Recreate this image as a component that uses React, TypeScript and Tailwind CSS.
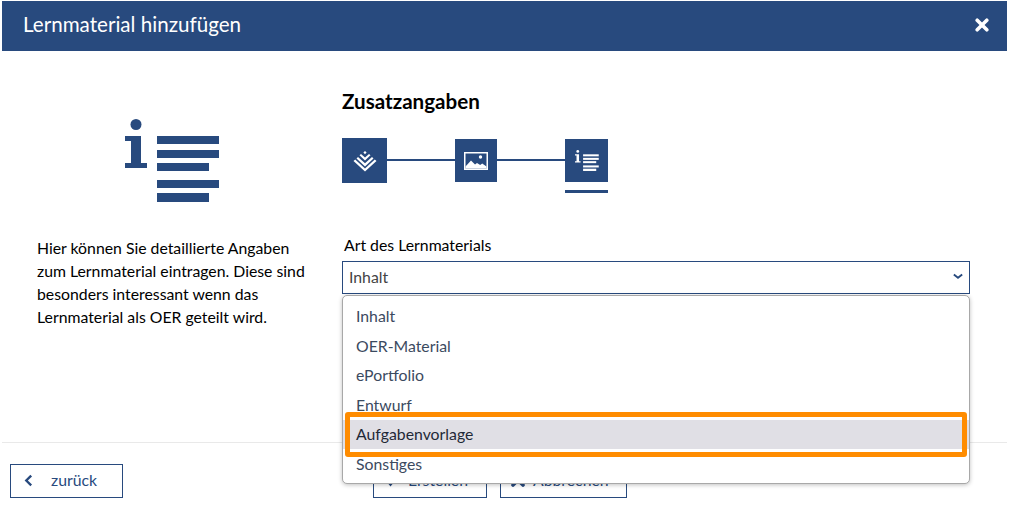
const OPTIONS = ["Inhalt", "OER-Material", "ePortfolio", "Entwurf", "Aufgabenvorlage", "Sonstiges"];

function InfoList({ className }: { className?: string }) {
  return (
    <svg viewBox="0 0 95 83" className={className} fill="currentColor">
      <circle cx="11" cy="5.5" r="5.5" />
      <path d="M0 17h16v27h6v5H0v-5h6V22H0z" />
      <rect x="32" y="17" width="62" height="8" />
      <rect x="32" y="31" width="62" height="8" />
      <rect x="32" y="44" width="52" height="8" />
      <rect x="32" y="61" width="62" height="8" />
      <rect x="32" y="74" width="52" height="9" />
    </svg>
  );
}

function Layers() {
  return (
    <svg viewBox="0 0 24 24" className="w-[24px] h-[24px] text-white" fill="currentColor">
      <path d="M12 2l1.6 1.6L12 5.2l-1.6-1.6z" />
      <path d="M6.5 6.3L8 5l4 3.6L16 5l1.5 1.3L12 11.5z" />
      <path d="M3.5 9.4L5 8l7 6.3L19 8l1.5 1.4L12 17.4z" />
      <path d="M0.5 12.6L2.2 11 12 20l9.8-9 1.7 1.6L12 23z" transform="translate(0 -0.5)" />
    </svg>
  );
}

function ImageIcon() {
  return (
    <svg viewBox="0 0 24 18" className="w-[24px] h-[18px] text-white" fill="currentColor">
      <path fillRule="evenodd" d="M0 0h24v18H0zM1.5 1.5v15h21v-15z" />
      <circle cx="16.5" cy="5" r="1.7" />
      <path d="M1.5 16.5v-2l5.5-6 4 4 2-1.5 3.2 2 2-1.5 4.3 3v2z" />
    </svg>
  );
}

function Step({ children, size }: { children: React.ReactNode; size: string }) {
  return <div className={`${size} shrink-0 bg-[#284a7e] flex items-center justify-center`}>{children}</div>;
}

function Btn({ children, w }: { children: React.ReactNode; w: string }) {
  return (
    <button className={`${w} h-[34px] border border-[#284a7e] bg-white text-[#284a7e] text-[15.8px] pb-[2px] flex items-center`}>
      {children}
    </button>
  );
}

export default function App() {
  return (
    <div className="relative w-[1011px] h-[522px] overflow-hidden bg-white font-['Lato','Carlito',sans-serif] text-black">
      <div className="ml-[2px] mt-[1px] w-[1005px]">
        <header className="h-[50px] bg-[#284a7e] text-white flex items-center justify-between pl-[21px] pr-[18px]">
          <h1 className="text-[20.6px] leading-[28px] mt-[-4px]">Lernmaterial hinzufügen</h1>
          <svg viewBox="0 0 14 14" className="w-[14px] h-[14px] mt-[-2px]" fill="none" stroke="currentColor" strokeWidth="3.6" strokeLinecap="round">
            <path d="M2.2 2.2l9.6 9.6M11.8 2.2l-9.6 9.6" />
          </svg>
        </header>

        <main className="h-[392px] flex border-b border-[#e9e9e9]">
          <div className="w-[340px] shrink-0 pl-[35px]">
            <div className="pl-[88px] pt-[68px]">
              <InfoList className="w-[95px] h-[83px] text-[#284a7e]" />
            </div>
            <p className="mt-[34px] text-[15.8px] leading-[23px] w-[280px]">
              Hier können Sie detaillierte Angaben zum Lernmaterial eintragen. Diese sind besonders interessant wenn das Lernmaterial als OER geteilt wird.
            </p>
          </div>

          <div className="w-[628px] shrink-0">
            <h2 className="mt-[37px] text-[20.6px] font-bold leading-[26px]">Zusatzangaben</h2>
            <div className="mt-[24px] flex items-center w-[266px] h-[45px]">
              <Step size="w-[45px] h-[45px]"><Layers /></Step>
              <div className="flex-1 h-[2px] mb-[2px] bg-[#284a7e]" />
              <Step size="w-[42px] h-[43px]"><ImageIcon /></Step>
              <div className="flex-1 h-[2px] mb-[2px] bg-[#284a7e]" />
              <Step size="w-[43px] h-[43px]"><InfoList className="w-[24px] h-[21px] text-white" /></Step>
            </div>
            <div className="mt-[7px] ml-[223px] w-[43px] h-[3px] bg-[#284a7e]" />
            <label className="block mt-[42px] text-[15.8px] leading-[20px] pl-[2px]">Art des Lernmaterials</label>
            <div className="mt-[6px] h-[33px] border border-[#284a7e] flex items-center justify-between pl-[6px] pr-[6px] pb-[2px] text-[15.8px] text-[#444]">
              <span>Inhalt</span>
              <svg viewBox="0 0 12 8" className="w-[10px] h-[7px] text-[#284a7e]" fill="none" stroke="currentColor" strokeWidth="2.2">
                <path d="M1 1.5l5 4 5-4" />
              </svg>
            </div>
          </div>
        </main>

        <footer className="pt-[21px] relative">
          <div className="absolute left-[8px] top-[21px]">
            <Btn w="w-[113px]">
              <svg viewBox="0 0 10 14" className="w-[9px] h-[13px] ml-[13px]" fill="none" stroke="currentColor" strokeWidth="2.6">
                <path d="M8 1.5L2.5 7 8 12.5" />
              </svg>
              <span className="ml-[18px]">zurück</span>
            </Btn>
          </div>
          <div className="flex ml-[371px] gap-[13px]">
            <Btn w="w-[114px]">
              <svg viewBox="0 0 14 14" className="w-[13px] h-[13px] ml-[10px]" fill="currentColor"><path d="M7 13.5L1 6h12z" /></svg>
              <span className="ml-[11px]">Erstellen</span>
            </Btn>
            <Btn w="w-[127px]">
              <svg viewBox="0 0 14 14" className="w-[14px] h-[14px] ml-[10px]" fill="none" stroke="currentColor" strokeWidth="3.6" strokeLinecap="round"><path d="M2 2l10 10M12 2L2 12" /></svg>
              <span className="ml-[8px]">Abbrechen</span>
            </Btn>
          </div>
        </footer>
      </div>

      <ul className="absolute left-[342px] top-[295px] w-[628px] h-[189px] pt-[5.2px] bg-white border border-[#a8a8a8] rounded-[5px] shadow-[0_1px_4px_rgba(0,0,0,0.25)] text-[15.8px] text-[#3b4a60]">
        {OPTIONS.map((o) => (
          <li
            key={o}
            className={`h-[29.6px] flex items-center pl-[13px] ${o === "Aufgabenvorlage" ? "bg-[#e0dfe5] text-[#1f2937] pb-[1px]" : ""}`}
          >
            {o}
          </li>
        ))}
      </ul>
      <div className="absolute left-[345px] top-[412px] w-[622px] h-[45px] border-[5px] border-[#ff8c00] rounded-[3px]" />
    </div>
  );
}
